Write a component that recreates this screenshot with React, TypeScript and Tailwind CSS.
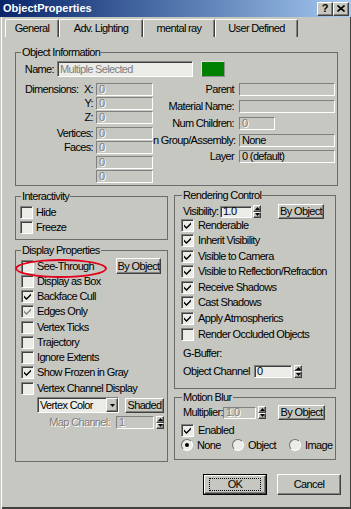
import React from 'react'

// classic win2k-ish edges
const raised =
  'border-t border-l border-t-white border-l-white border-b border-r border-b-[#404040] border-r-[#404040] shadow-[inset_-1px_-1px_0_#808080]'
const sunken =
  'border-t border-l border-t-[#808080] border-l-[#808080] border-b border-r border-b-white border-r-white'

function Group({
  title,
  labelLeft = 'left-[5px]',
  className = '',
  children,
}: {
  title: string
  labelLeft?: string
  className?: string
  children?: React.ReactNode
}) {
  return (
    <div className={`relative border border-[#6b6b6b] ${className}`}>
      <span className={`absolute top-[-8px] ${labelLeft} px-[1px] bg-[#c6c7c1] leading-[14px] whitespace-nowrap`}>
        {title}
      </span>
      {children}
    </div>
  )
}

function Field({
  className = '',
  light = false,
  dim = false,
  children,
}: {
  className?: string
  light?: boolean
  dim?: boolean
  children?: React.ReactNode
}) {
  return (
    <div
      className={`flex items-center pl-[2px] overflow-hidden whitespace-nowrap leading-none ${sunken} ${
        light ? 'bg-[#ebebe7] shadow-[inset_1px_1px_0_#404040]' : 'bg-[#c6c7c1]'
      } ${dim ? 'text-[#7f7f7f] [text-shadow:1px_1px_0_#ffffff]' : ''} ${className}`}
    >
      {children}
    </div>
  )
}

function Spinner({ className = '' }: { className?: string }) {
  return (
    <div className={`flex flex-col w-[8px] h-[13px] shrink-0 ${className}`}>
      <div className={`flex-1 flex items-center justify-center ${raised}`}>
        <svg width="5" height="3" viewBox="0 0 5 3">
          <path d="M2.5 0L5 3H0z" fill="#000" />
        </svg>
      </div>
      <div className={`flex-1 flex items-center justify-center ${raised}`}>
        <svg width="5" height="3" viewBox="0 0 5 3">
          <path d="M0 0h5L2.5 3z" fill="#000" />
        </svg>
      </div>
    </div>
  )
}

function Btn({ className = '', children }: { className?: string; children?: React.ReactNode }) {
  return (
    <div className={`flex items-center justify-center leading-none whitespace-nowrap shrink-0 bg-[#c6c7c1] ${raised} ${className}`}>
      {children}
    </div>
  )
}

function Box({ checked = false, dim = false }: { checked?: boolean; dim?: boolean }) {
  return (
    <span
      className={`w-[13px] h-[13px] shrink-0 flex items-center justify-center bg-[#ebebe7] ${sunken} shadow-[inset_1px_1px_0_#404040]`}
    >
      {checked && (
        <svg width="7" height="7" viewBox="0 0 7 7">
          <path d="M0 2.5L2.5 5L7 0.5V2.5L2.5 7L0 4.5Z" fill={dim ? '#808080' : '#000'} />
        </svg>
      )}
    </span>
  )
}

function CheckRow({
  label,
  checked = false,
  dim = false,
  className = '',
  gap = 'ml-[3px]',
  children,
}: {
  label: string
  checked?: boolean
  dim?: boolean
  className?: string
  gap?: string
  children?: React.ReactNode
}) {
  return (
    <div className={`flex items-center ${className}`}>
      <Box checked={checked} dim={dim} />
      <span className={`${gap} leading-none whitespace-nowrap`}>{label}</span>
      {children}
    </div>
  )
}

function Radio({ on = false, label, className = '' }: { on?: boolean; label: string; className?: string }) {
  return (
    <div className={`flex items-center ${className}`}>
      <span className="w-[12px] h-[12px] rounded-full shrink-0 flex items-center justify-center bg-[#ebebe7] border border-t-[#707070] border-l-[#707070] border-b-white border-r-white">
        {on && <span className="w-[4px] h-[4px] rounded-full bg-black" />}
      </span>
      <span className="ml-[4px] leading-none">{label}</span>
    </div>
  )
}

function LRow({ label, mt = '' }: { label: React.ReactNode; mt?: string }) {
  return (
    <div className={`flex items-center h-[13px] ${mt}`}>
      <div className="w-[77px] text-right leading-none">{label}</div>
      <Field dim className="ml-[3px] w-[57px] h-[13px]">0</Field>
    </div>
  )
}

function RRow({
  label,
  mt = '',
  fw = 'w-[96px]',
  dim = false,
  value = '',
}: {
  label: string
  mt?: string
  fw?: string
  dim?: boolean
  value?: string
}) {
  return (
    <div className={`flex items-center h-[13px] ${mt}`}>
      <div className="w-[81px] text-right leading-none whitespace-nowrap">{label}</div>
      <Field dim={dim} className={`ml-[5px] ${fw} h-[13px]`}>
        {value}
      </Field>
    </div>
  )
}

const tabs = [
  { label: 'General', w: 'w-[54px]' },
  { label: 'Adv. Lighting', w: 'w-[84px]' },
  { label: 'mental ray', w: 'w-[72px]' },
  { label: 'User Defined', w: 'w-[83px]' },
]

export default function App() {
  return (
    <div className="w-[351px] h-[509px] bg-[#c6c7c1] text-black text-[11px] tracking-[-0.65px] font-['Liberation_Sans',Arial,sans-serif] flex flex-col overflow-hidden shadow-[inset_1px_0_0_#c6c7c1,inset_2px_0_0_#ffffff,inset_0_-2px_0_#404040,inset_-1px_0_0_#404040]">
      {/* Title bar */}
      <div className="h-[17px] shrink-0 flex items-center bg-linear-to-r from-[#0a246a] to-[#a6caf0] pl-[3px] pr-[2px] tracking-normal">
        <span className="font-bold text-white text-[11px] leading-none">ObjectProperties</span>
        <div className="ml-auto flex">
          <Btn className="w-[16px] h-[14px] font-bold text-[11px]">?</Btn>
          <Btn className="w-[16px] h-[14px]">
            <svg width="8" height="7" viewBox="0 0 8 7">
              <path d="M0.5 0.5L7.5 6.5M7.5 0.5L0.5 6.5" stroke="#000" strokeWidth="1.6" />
            </svg>
          </Btn>
        </div>
      </div>

      {/* Tabs */}
      <div className="h-[20px] shrink-0 flex items-end pl-[5px]">
        {tabs.map((t) => (
          <div
            key={t.label}
            className={`h-[18px] ${t.w} flex items-center justify-center leading-none rounded-t-[2px] border-t border-l border-t-white border-l-white border-r border-r-[#404040] shadow-[inset_-1px_0_0_#808080]`}
          >
            {t.label}
          </div>
        ))}
      </div>

      <div className="px-[15px] flex flex-col">
        {/* Object Information */}
        <Group title="Object Information" className="w-[323px] h-[134px] mt-[15px]">
          <div className="pt-[8px] flex items-center">
            <span className="w-[38px] text-right leading-none">Name:</span>
            <Field light className="ml-[3px] w-[136px] h-[16px] text-[#7f7f7f]">
              Multiple Selected
            </Field>
            <div className="ml-[8px] w-[24px] h-[16px] bg-[#008000] border border-t-[#e0e0e0] border-l-[#e0e0e0] border-b-[#909090] border-r-[#909090]" />
          </div>
          <div className="mt-[6px] flex">
            <div className="flex flex-col">
              <LRow
                label={
                  <div className="flex justify-between pl-[9px]">
                    <span>Dimensions:</span>
                    <span>X:</span>
                  </div>
                }
              />
              <LRow label="Y:" mt="mt-[1px]" />
              <LRow label="Z:" mt="mt-[1px]" />
              <LRow label="Vertices:" mt="mt-[3px]" />
              <LRow label="Faces:" mt="mt-[1px]" />
              <LRow label="" mt="mt-[2px]" />
              <LRow label="" mt="mt-[1px]" />
            </div>
            <div className="flex flex-col">
              <RRow label="Parent" />
              <RRow label="Material Name:" mt="mt-[4px]" />
              <RRow label="Num Children:" mt="mt-[4px]" fw="w-[36px]" dim value="0" />
              <RRow label="n Group/Assembly:" mt="mt-[4px]" value="None" />
              <RRow label="Layer" mt="mt-[3px]" value="0 (default)" />
            </div>
          </div>
        </Group>

        <div className="flex items-start gap-[6px] mt-[10px]">
          {/* left column */}
          <div className="w-[154px] flex flex-col">
            <Group title="Interactivity" className="h-[44px]">
              <div className="pt-[8px] pl-[4px] flex flex-col">
                <CheckRow label="Hide" className="h-[15px]" />
                <CheckRow label="Freeze" className="h-[15px]" />
              </div>
            </Group>

            <Group title="Display Properties" className="h-[212px] mt-[10px]">
              <div className="absolute left-[-1px] top-[8px] w-[92px] h-[19px] rounded-[50%] border-2 border-[#e3001b] pointer-events-none" />
              <div className="pt-[7.5px] pl-[5px] flex flex-col">
                <CheckRow label="See-Through" className="h-[15.25px]">
                  <Btn className="ml-auto mr-[6px] w-[45px] h-[16px]">By Object</Btn>
                </CheckRow>
                <CheckRow label="Display as Box" className="h-[15.25px]" />
                <CheckRow label="Backface Cull" checked className="h-[15.25px]" />
                <CheckRow label="Edges Only" checked dim className="h-[15.25px]" />
                <CheckRow label="Vertex Ticks" className="h-[15.25px]" />
                <CheckRow label="Trajectory" className="h-[15.25px]" />
                <CheckRow label="Ignore Extents" className="h-[15.25px]" />
                <CheckRow label="Show Frozen in Gray" checked className="h-[15.25px]" />
                <CheckRow label="Vertex Channel Display" className="h-[15.25px]" />
              </div>
              <div className="mt-[1.25px] pl-[21px] flex items-center">
                <div className={`flex w-[82px] h-[16px] bg-[#ebebe7] ${sunken} shadow-[inset_1px_1px_0_#404040]`}>
                  <span className="flex-1 pl-[2px] leading-[14px] whitespace-nowrap">Vertex Color</span>
                  <Btn className="w-[12px] h-full">
                    <svg width="5" height="3" viewBox="0 0 5 3">
                      <path d="M0 0h5L2.5 3z" fill="#000" />
                    </svg>
                  </Btn>
                </div>
                <Btn className="ml-[6px] w-[39px] h-[15px]">Shaded</Btn>
              </div>
              <div className="mt-[3px] flex items-center h-[13px]">
                <span className="w-[94px] text-right leading-none text-[#7f7f7f] [text-shadow:1px_1px_0_#ffffff]">
                  Map Channel:
                </span>
                <Field dim className="ml-[6px] w-[38px] h-[13px]">1</Field>
                <Spinner className="ml-[2px]" />
              </div>
            </Group>
          </div>

          {/* right column */}
          <div className="w-[163px] flex flex-col mt-[-1px]">
            <Group title="Rendering Control" labelLeft="left-[7px]" className="h-[194px]">
              <div className="pt-[8px] pl-[8px]">
                <div className="flex items-center h-[15px]">
                  <span className="w-[37px] leading-none">Visibility:</span>
                  <Field light className="w-[32px] h-[12px]">1.0</Field>
                  <Spinner className="ml-[1px]" />
                  <Btn className="ml-[17px] w-[46px] h-[15px]">By Object</Btn>
                </div>
              </div>
              <div className="mt-[-1.8px] pl-[6px] flex flex-col">
                <CheckRow label="Renderable" checked gap="ml-[4px]" className="h-[15.6px]" />
                <CheckRow label="Inherit Visibility" checked gap="ml-[4px]" className="h-[15.6px]" />
                <CheckRow label="Visible to Camera" checked gap="ml-[4px]" className="h-[15.6px]" />
                <CheckRow label="Visible to Reflection/Refraction" checked gap="ml-[4px]" className="h-[15.6px]" />
                <CheckRow label="Receive Shadows" checked gap="ml-[4px]" className="h-[15.6px]" />
                <CheckRow label="Cast Shadows" checked gap="ml-[4px]" className="h-[15.6px]" />
                <CheckRow label="Apply Atmospherics" checked gap="ml-[4px]" className="h-[15.6px]" />
                <CheckRow label="Render Occluded Objects" gap="ml-[4px]" className="h-[15.6px]" />
              </div>
              <div className="mt-[5px] pl-[8px] h-[14px] flex items-center leading-none">G-Buffer:</div>
              <div className="mt-[4px] pl-[8px] h-[13px] flex items-center">
                <span className="w-[70px] leading-none whitespace-nowrap">Object Channel</span>
                <Field light className="ml-[1px] w-[38px] h-[13px]">0</Field>
                <Spinner className="ml-[2px]" />
              </div>
            </Group>

            <Group title="Motion Blur" labelLeft="left-[7px]" className="h-[63px] mt-[8px]">
              <div className="pt-[7px] pl-[8px]">
                <div className="flex items-center h-[15px]">
                  <span className="w-[40px] leading-none">Multiplier:</span>
                  <Field dim className="w-[33px] h-[12px]">1.0</Field>
                  <Spinner className="ml-[2px]" />
                  <Btn className="ml-[12px] w-[47px] h-[15px]">By Object</Btn>
                </div>
              </div>
              <div className="mt-[2.5px] pl-[6px] flex flex-col">
                <CheckRow label="Enabled" checked gap="ml-[4px]" className="h-[15px]" />
                <div className="flex items-center h-[15px]">
                  <Radio on label="None" className="w-[51px]" />
                  <Radio label="Object" className="w-[57px]" />
                  <Radio label="Image" />
                </div>
              </div>
            </Group>
          </div>
        </div>
      </div>

      {/* footer */}
      <div className="mt-[12px] flex justify-end gap-[10px] pr-[10px]">
        <div className="w-[64px] h-[21px] border border-black">
          <Btn className="w-full h-full">
            <span className="w-[52px] h-[13px] flex items-center justify-center border border-dotted border-black leading-none">
              OK
            </span>
          </Btn>
        </div>
        <Btn className="w-[64px] h-[21px]">Cancel</Btn>
      </div>
    </div>
  )
}
